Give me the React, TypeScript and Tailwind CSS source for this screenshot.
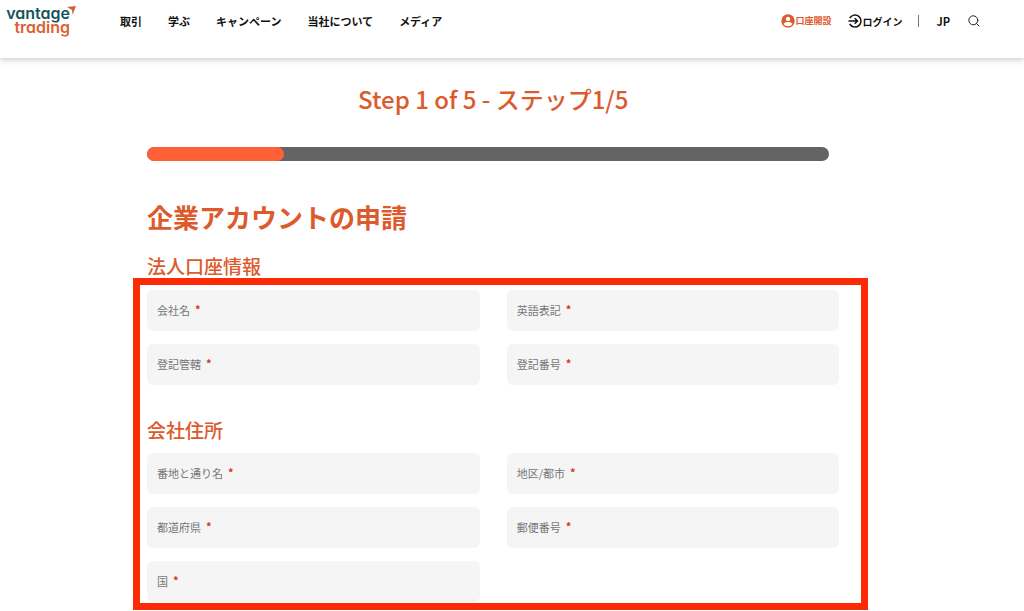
import { useState } from 'react';

const navItems = ['取引', '学ぶ', 'キャンペーン', '当社について', 'メディア'];

const companyFields = [
  { id: 'companyName', label: '会社名' },
  { id: 'englishName', label: '英語表記' },
  { id: 'jurisdiction', label: '登記管轄' },
  { id: 'registrationNumber', label: '登記番号' },
];

const addressFields = [
  { id: 'street', label: '番地と通り名' },
  { id: 'city', label: '地区/都市' },
  { id: 'prefecture', label: '都道府県' },
  { id: 'postalCode', label: '郵便番号' },
  { id: 'country', label: '国' },
];

function Logo() {
  return (
    <a
      href="#"
      className="relative flex w-[70px] flex-col items-end pr-[6px] font-['Inter',sans-serif] text-[16px] leading-[14px] font-semibold [font-feature-settings:'cv11']"
    >
      <span className="text-[#15545c]">vantage</span>
      <span className="text-[#dc5f33]">trading</span>
      <svg viewBox="0 0 9 9" className="absolute top-0 right-0 h-[9px] w-[9px]" fill="#dc5f33">
        <path d="M0 1 9 0 5.5 9 5 4Z" />
      </svg>
    </a>
  );
}

function UserIcon() {
  return (
    <svg viewBox="0 0 14 14" className="h-[14px] w-[14px]">
      <circle cx="7" cy="7" r="6.7" fill="#dc5a2c" />
      <circle cx="7" cy="4.9" r="2.2" fill="#fff" />
      <path
        d="M2.5 10.1C3.5 8.5 5.2 8 7 8s3.5.5 4.5 2.1C10.4 11.6 8.8 12.3 7 12.3S3.6 11.6 2.5 10.1Z"
        fill="#fff"
      />
    </svg>
  );
}

function LoginIcon() {
  return (
    <svg
      viewBox="0 0 14 14"
      className="h-[14px] w-[14px]"
      fill="none"
      stroke="#111"
      strokeWidth="1.5"
    >
      <path d="M1.7 4.2A6 6 0 1 1 1.7 9.8" />
      <path d="M0.5 7H9.3M6.7 4.2 9.5 7 6.7 9.8" />
    </svg>
  );
}

function SearchIcon() {
  return (
    <svg
      viewBox="0 0 12 12"
      className="h-[12px] w-[12px]"
      fill="none"
      stroke="#222"
      strokeLinecap="round"
    >
      <circle cx="5.3" cy="5.3" r="4.5" />
      <path d="M8.6 8.6 11 11" />
    </svg>
  );
}

type FieldProps = {
  id: string;
  label: string;
  value: string;
  onChange: (value: string) => void;
};

function Field({ id, label, value, onChange }: FieldProps) {
  return (
    <div className="flex h-[41px] items-center rounded-md bg-[#f5f5f5] px-[10px]">
      <label htmlFor={id} className="flex shrink-0 gap-[5px] text-[11px] text-[#777]">
        <span className="leading-[15px]">{label}</span>
        <span className="leading-3 font-bold text-[#d2391c]">*</span>
      </label>
      <input
        id={id}
        type="text"
        required
        value={value}
        onChange={(e) => onChange(e.target.value)}
        className="min-w-0 flex-1 bg-transparent pl-2 text-[11px] text-[#333] outline-none"
      />
    </div>
  );
}

export default function App() {
  const [formData, setFormData] = useState<Record<string, string>>({});

  const renderFields = (fields: { id: string; label: string }[]) => (
    <div className="grid grid-cols-2 gap-x-[27px] gap-y-[13px]">
      {fields.map((field) => (
        <Field
          key={field.id}
          id={field.id}
          label={field.label}
          value={formData[field.id] ?? ''}
          onChange={(value) => setFormData({ ...formData, [field.id]: value })}
        />
      ))}
    </div>
  );

  return (
    <div lang="ja" className="bg-white font-['Noto_Sans_CJK_JP',sans-serif]">
      <header className="flex h-[58px] items-start pt-[6px] pr-[44px] pl-[6px] text-[11px] font-bold text-[#111] shadow-[0_2px_6px_rgba(0,0,0,0.2)]">
        <Logo />
        <nav className="ml-[44px] flex h-[30px] items-center gap-[26px]">
          {navItems.map((item) => (
            <a key={item} href="#">
              {item}
            </a>
          ))}
        </nav>
        <div className="ml-auto flex h-[30px] items-center">
          <a href="#" className="flex items-center text-[9px] text-[#dc5a2c]">
            <UserIcon />
            口座開設
          </a>
          <a href="#" className="ml-[17px] flex items-center text-[10px]">
            <LoginIcon />
            ログイン
          </a>
          <span className="ml-[16px] h-[12px] w-px bg-[#777]"></span>
          <button type="button" className="ml-[17px]">
            JP
          </button>
          <button type="button" aria-label="検索" className="ml-[18px]">
            <SearchIcon />
          </button>
        </div>
      </header>

      <main className="pt-[21px] pr-[15.2%] pl-[13%] text-[#dc5a2c]">
        <div className="pr-[29px] pl-[14px]">
          <p className="text-center text-[24px] leading-[40px] font-medium">
            Step 1 of 5 - ステップ1/5
          </p>
          <div className="mt-[28px] mr-[10px] h-[14px] overflow-hidden rounded-full bg-[#646464]">
            <div className="h-full w-1/5 rounded-full bg-[#ff6038]"></div>
          </div>
          <h1 className="mt-[38px] text-[26px] leading-[36px] font-bold">企業アカウントの申請</h1>
          <h2 className="mt-[19px] text-[19px] leading-[24px] font-medium">法人口座情報</h2>
        </div>

        <form className="border-[7px] border-[#fc2a05] pt-[5px] pr-[22px] pb-px pl-[7px]">
          {renderFields(companyFields)}
          <h2 className="mt-[33px] mb-[11px] text-[19px] leading-[24px] font-medium">会社住所</h2>
          {renderFields(addressFields)}
        </form>
      </main>
    </div>
  );
}
